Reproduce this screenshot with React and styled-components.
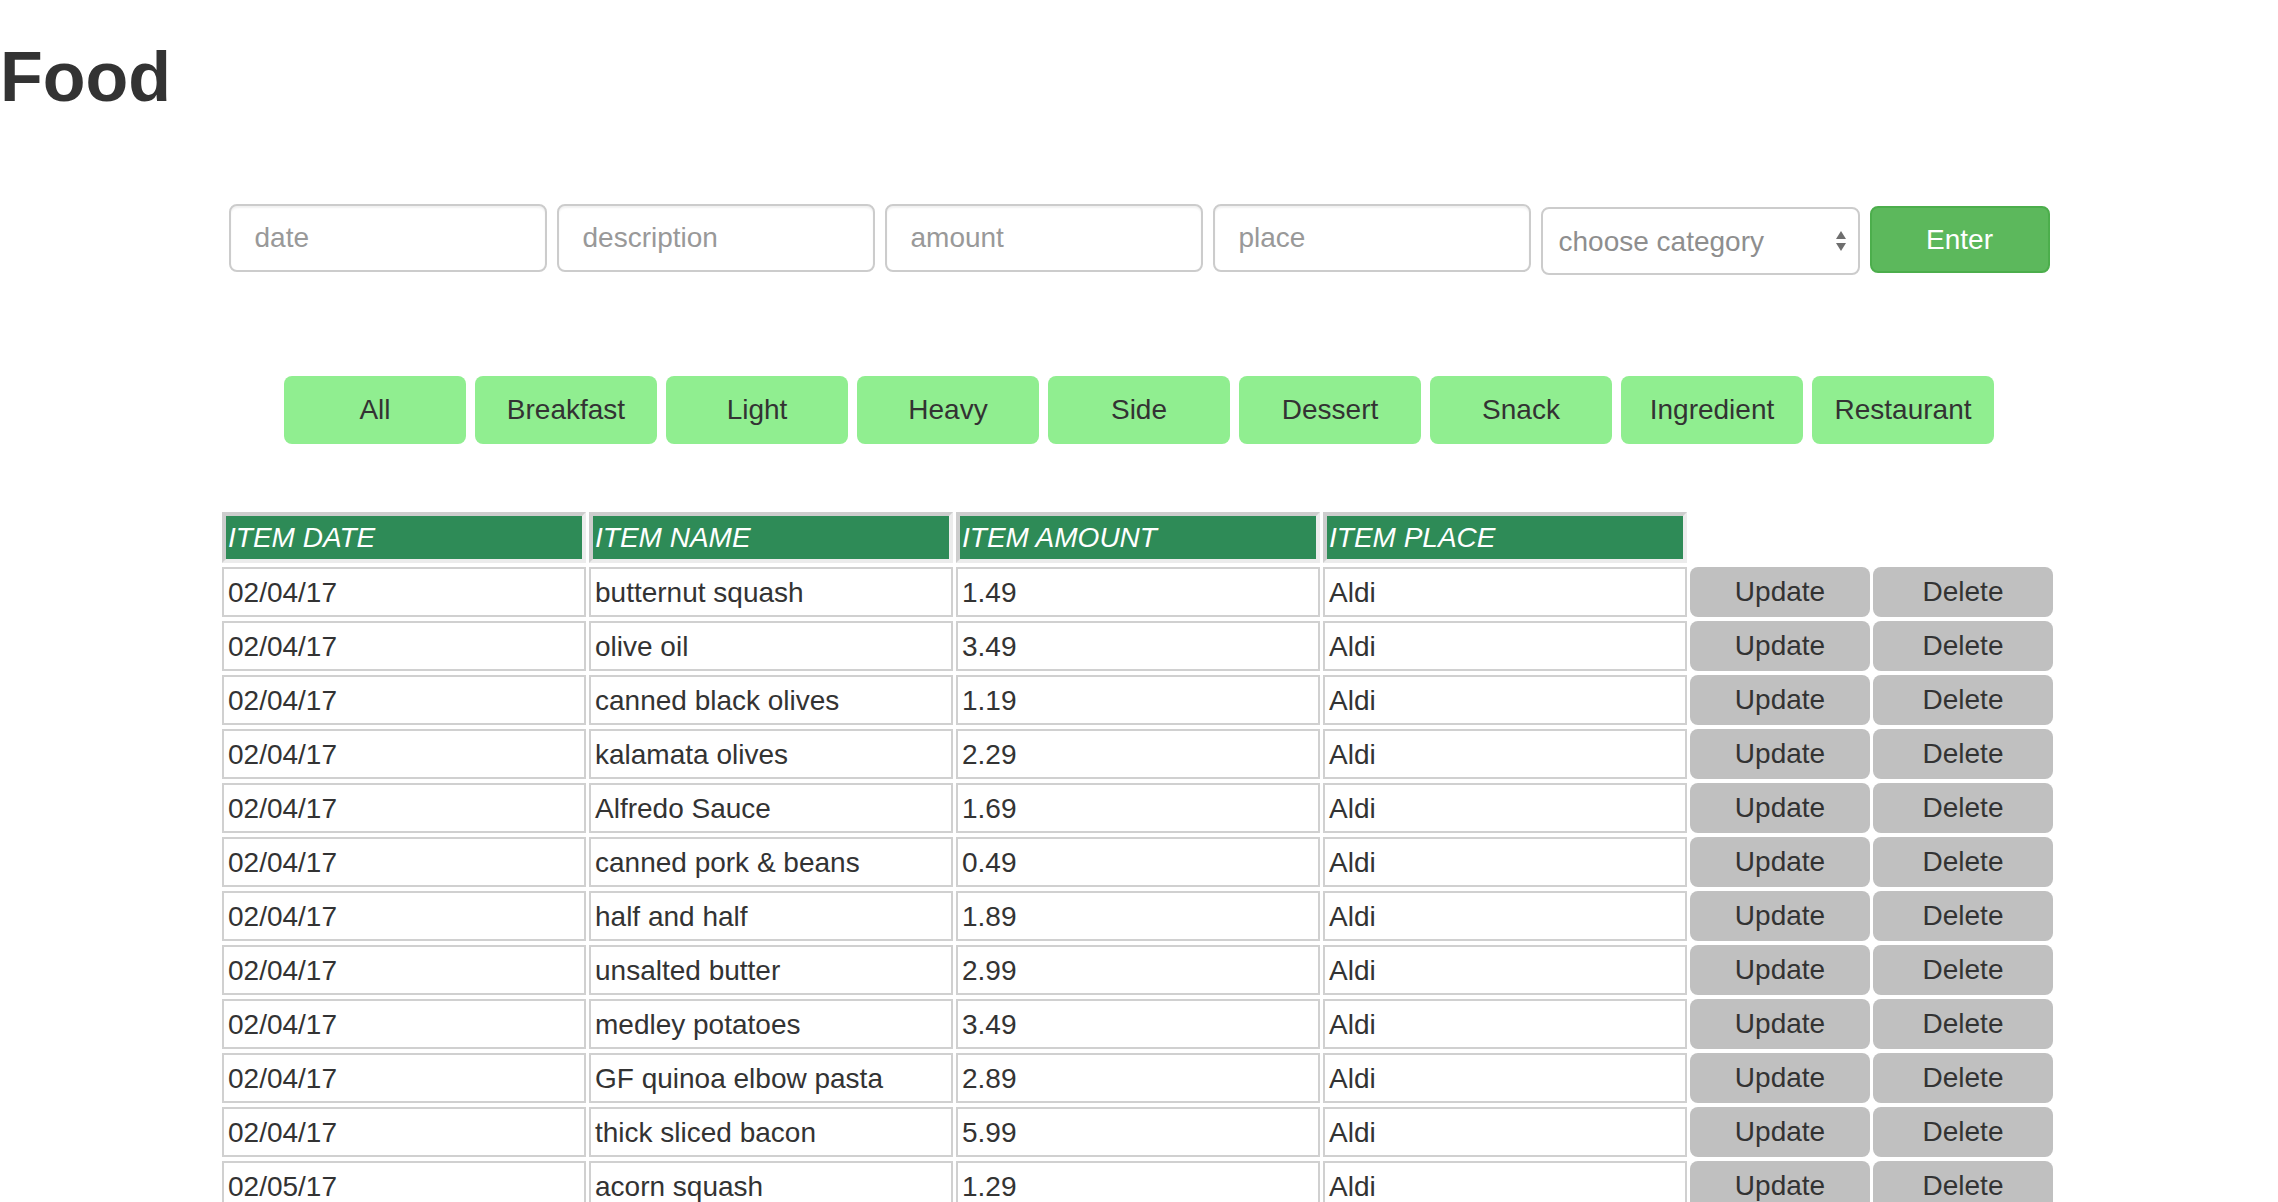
import { styled, createGlobalStyle } from "styled-components";

const GlobalStyle = createGlobalStyle`
  html, body {
    margin: 0;
    padding: 0;
    background: #fff;
    font-family: "Liberation Sans", Arial, Helvetica, sans-serif;
    color: #333;
  }
  ::-webkit-scrollbar {
    width: 0;
    height: 0;
  }
`;

const categories = [
  "All",
  "Breakfast",
  "Light",
  "Heavy",
  "Side",
  "Dessert",
  "Snack",
  "Ingredient",
  "Restaurant",
];

const items = [
  ["02/04/17", "butternut squash", "1.49", "Aldi"],
  ["02/04/17", "olive oil", "3.49", "Aldi"],
  ["02/04/17", "canned black olives", "1.19", "Aldi"],
  ["02/04/17", "kalamata olives", "2.29", "Aldi"],
  ["02/04/17", "Alfredo Sauce", "1.69", "Aldi"],
  ["02/04/17", "canned pork & beans", "0.49", "Aldi"],
  ["02/04/17", "half and half", "1.89", "Aldi"],
  ["02/04/17", "unsalted butter", "2.99", "Aldi"],
  ["02/04/17", "medley potatoes", "3.49", "Aldi"],
  ["02/04/17", "GF quinoa elbow pasta", "2.89", "Aldi"],
  ["02/04/17", "thick sliced bacon", "5.99", "Aldi"],
  ["02/05/17", "acorn squash", "1.29", "Aldi"],
];

export default function App() {
  return (
    <>
      <GlobalStyle />
      <Page>
        <Title>Food</Title>

        <EntryForm onSubmit={(e) => e.preventDefault()}>
          <TextInput placeholder="date" />
          <TextInput placeholder="description" />
          <TextInput placeholder="amount" />
          <TextInput placeholder="place" />
          <SelectWrap>
            <Select defaultValue="">
              <option value="" disabled>
                choose category
              </option>
              {categories.slice(1).map((c) => (
                <option key={c} value={c}>
                  {c}
                </option>
              ))}
            </Select>
            <SelectArrows width="12" height="22" viewBox="0 0 12 22">
              <path d="M1 9 L6 1 L11 9 Z" fill="#6e6e6e" />
              <path d="M1 13 L11 13 L6 21 Z" fill="#6e6e6e" />
            </SelectArrows>
          </SelectWrap>
          <EnterButton type="submit">Enter</EnterButton>
        </EntryForm>

        <CategoryBar>
          {categories.map((c) => (
            <CategoryButton key={c}>{c}</CategoryButton>
          ))}
        </CategoryBar>

        <ItemTable>
          <thead>
            <tr>
              <HeadCell>ITEM DATE</HeadCell>
              <HeadCell>ITEM NAME</HeadCell>
              <HeadCell>ITEM AMOUNT</HeadCell>
              <HeadCell>ITEM PLACE</HeadCell>
            </tr>
          </thead>
          <tbody>
            {items.map((row, i) => (
              <tr key={i}>
                {row.map((cell, j) => (
                  <Cell key={j}>{cell}</Cell>
                ))}
                <ButtonCell>
                  <RowButton>Update</RowButton>
                </ButtonCell>
                <ButtonCell>
                  <RowButton>Delete</RowButton>
                </ButtonCell>
              </tr>
            ))}
          </tbody>
        </ItemTable>
      </Page>
    </>
  );
}

const Page = styled.div`
  display: flex;
  flex-direction: column;
  align-items: stretch;
  width: 100%;
`;

const Title = styled.h1`
  margin: 38px 0 0 0;
  font-size: 70px;
  line-height: 79px;
  font-weight: 700;
  color: #333;
`;

const EntryForm = styled.form`
  display: flex;
  justify-content: center;
  align-items: flex-start;
  gap: 10px;
  margin-top: 87px;
`;

const TextInput = styled.input`
  box-sizing: border-box;
  width: 318px;
  height: 68px;
  padding: 12px 24px;
  border: 2px solid #ccc;
  border-radius: 8px;
  font-family: inherit;
  font-size: 28px;
  color: #555;
  outline: none;
  box-shadow: inset 0 2px 2px rgba(0, 0, 0, 0.06);
  &::placeholder {
    color: #999;
  }
`;

const SelectWrap = styled.div`
  position: relative;
  margin-top: 3px;
`;

const Select = styled.select`
  box-sizing: border-box;
  appearance: none;
  width: 319px;
  height: 68px;
  padding: 0 40px 0 16px;
  border: 2px solid #ccc;
  border-radius: 8px;
  background: #fff;
  font-family: inherit;
  font-size: 28px;
  color: #8e8e8e;
  outline: none;
`;

const SelectArrows = styled.svg`
  position: absolute;
  right: 13px;
  top: 23px;
  pointer-events: none;
`;

const EnterButton = styled.button`
  box-sizing: border-box;
  width: 180px;
  height: 67px;
  margin-top: 2px;
  border: 2px solid #4cae4c;
  border-radius: 8px;
  background: #5cb85c;
  color: #fff;
  font-family: inherit;
  font-size: 28px;
  cursor: pointer;
`;

const CategoryBar = styled.div`
  display: flex;
  justify-content: center;
  gap: 9px;
  margin-top: 101px;
`;

const CategoryButton = styled.button`
  width: 182px;
  height: 68px;
  border: none;
  border-radius: 8px;
  background: #90ee90;
  color: #333;
  font-family: inherit;
  font-size: 28px;
  cursor: pointer;
`;

const ItemTable = styled.table`
  align-self: flex-start;
  margin: 64px 0 0 219px;
  border-collapse: separate;
  border-spacing: 3px 4px;
  font-size: 28px;
  color: #333;
`;

const HeadCell = styled.th`
  box-sizing: border-box;
  width: 364px;
  height: 51px;
  padding: 0 2px;
  border: 4px solid;
  border-color: #cdcdcd #ececec #ececec #cdcdcd;
  background: #2e8b57;
  background-clip: padding-box;
  color: #fff;
  font-style: italic;
  font-weight: 400;
  text-align: left;
  line-height: 43px;
  white-space: nowrap;
`;

const Cell = styled.td`
  box-sizing: border-box;
  width: 364px;
  height: 49px;
  padding: 0 4px;
  border: 2px solid #d0d0d0;
  line-height: 45px;
  white-space: nowrap;
`;

const ButtonCell = styled.td`
  width: 180px;
  padding: 0;
  vertical-align: middle;
`;

const RowButton = styled.button`
  display: block;
  width: 180px;
  height: 50px;
  border: none;
  border-radius: 8px;
  background: #c0c0c0;
  color: #333;
  font-family: inherit;
  font-size: 28px;
  cursor: pointer;
`;
